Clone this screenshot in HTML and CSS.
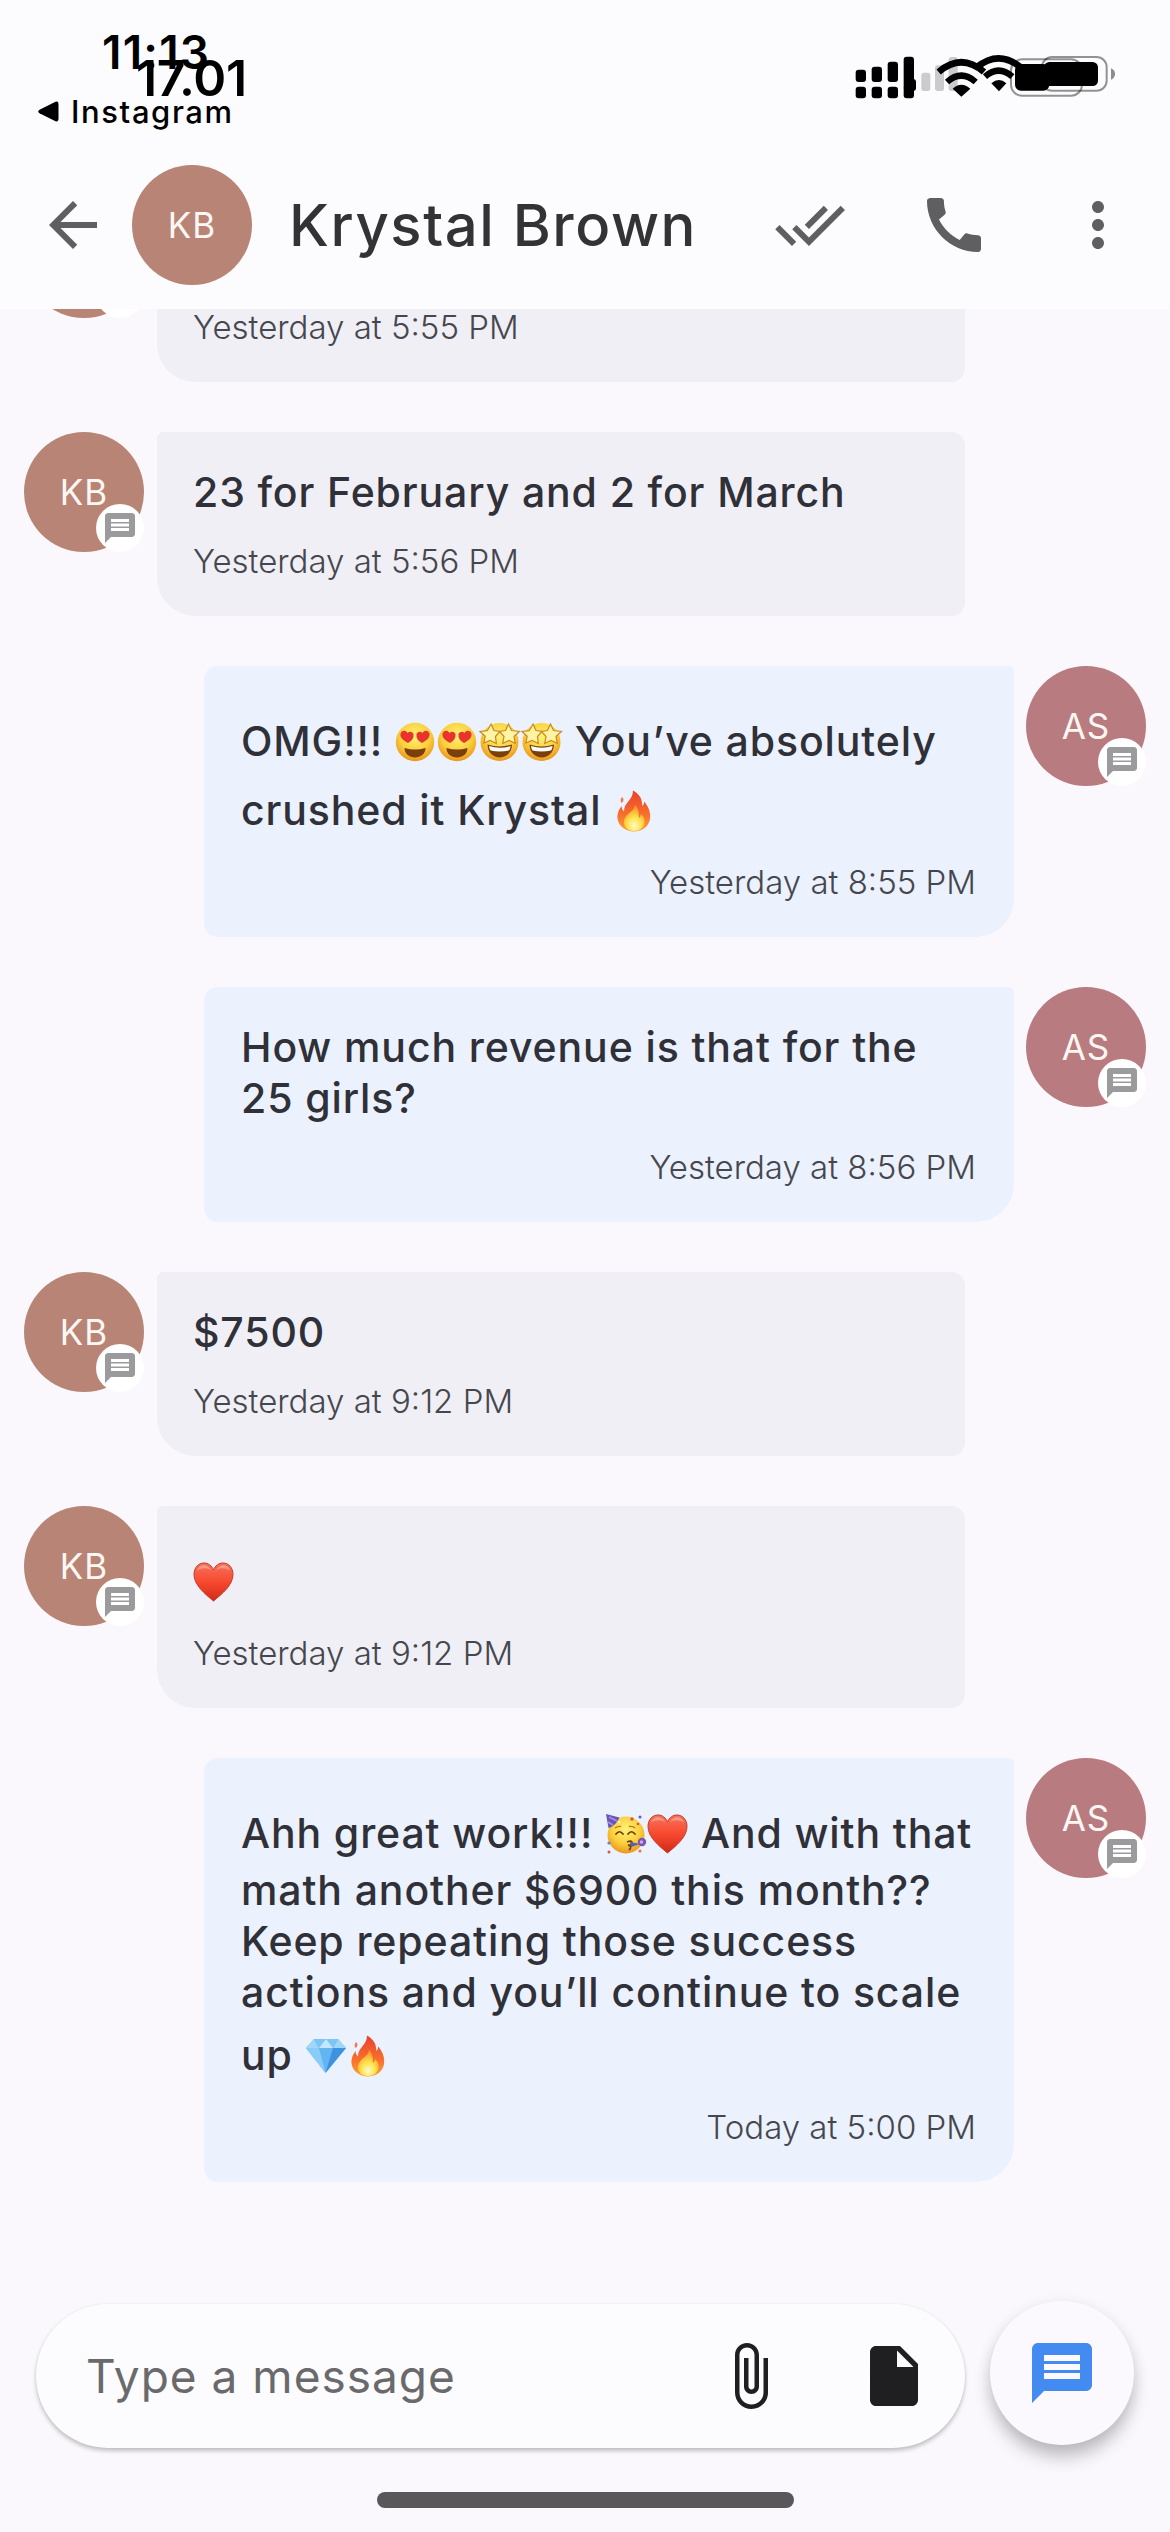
FILE: index.html
```html
<!DOCTYPE html>
<html lang="en">
<head>
<meta charset="utf-8">
<title>Krystal Brown</title>
<link rel="stylesheet" href="styles.css">
</head>
<body>
<svg class="defs" width="0" height="0" aria-hidden="true">
  <defs>
    <radialGradient id="face" cx=".5" cy=".35" r=".7">
      <stop offset="0" stop-color="#fff27a"/><stop offset=".55" stop-color="#fbd03c"/><stop offset="1" stop-color="#e88a17"/>
    </radialGradient>
    <linearGradient id="red" x1="0" y1="0" x2="0" y2="1">
      <stop offset="0" stop-color="#f5735c"/><stop offset=".5" stop-color="#f8492f"/><stop offset="1" stop-color="#cf2a18"/>
    </linearGradient>
    <linearGradient id="flame" x1="0" y1="0" x2="0" y2="1">
      <stop offset="0" stop-color="#e8412c"/><stop offset=".6" stop-color="#f9702c"/><stop offset="1" stop-color="#fba338"/>
    </linearGradient>
    <radialGradient id="glow" cx=".5" cy=".8" r=".7">
      <stop offset="0" stop-color="#fffbc4"/><stop offset=".5" stop-color="#ffe04a"/><stop offset="1" stop-color="#fd9a2c"/>
    </radialGradient>
    <symbol id="e-love" viewBox="0 0 42 42">
      <circle cx="20" cy="21" r="19.2" fill="url(#face)"/>
      <path d="M13 22C7 19 4 15 6 11.500c2-2.500 5-2 6.500.5 2-2 5.500-1.500 6 1.500.5 4-2.500 7-5.500 8.500z" fill="#e8342c"/>
      <path d="M27 22c-3-1.500-6-4.500-5.500-8.500.5-3 4-3.500 6-1.500 1.500-2.500 4.500-3 6.500-.5 2 3.500-1 7.500-7 10.500z" fill="#e8342c"/>
      <path d="M9.500 27q10.500 3 21 0c0 6-5 9.500-10.500 9.500S9.500 33 9.500 27z" fill="#7a3f0c"/>
    </symbol>
    <symbol id="e-star" viewBox="0 0 42 42">
      <circle cx="20.500" cy="21" r="19" fill="url(#face)"/>
      <path d="M12 3l3 6.500 6 1-4.500 5 .8 7L11 19.500 4.800 22l1.400-6.800L1 10.500l7.300-.8z" fill="#fff3a6" stroke="#c98a1d" stroke-width="1.200"/>
      <path d="M29.500 3l3 6.500 8 1-5.500 5 1.300 6.800-6.300-2.800-6.300 3 1.300-7-4.500-5 6-1z" fill="#fff3a6" stroke="#c98a1d" stroke-width="1.200"/>
      <path d="M8.500 23.500q12 4 24.500 0c0 8-6 13-12.200 13S8.500 31.500 8.500 23.500z" fill="#7a3f0c"/>
      <path d="M10 25q11 3.500 21.500 0c0 2-.8 3.500-1.500 4.500q-9.500 2-18.500 0Q10 27.500 10 25z" fill="#fff"/>
    </symbol>
    <symbol id="e-fire" viewBox="0 0 42 42">
      <path d="M20 .5c7 4 9.500 9 9.200 15.500 1.300-1 1.800-2.500 2-4.500C35 16 38 22 37 29c-1.300 7.500-7.500 12.500-16 12.500S5.500 36 4.500 28.500C4 23 6.500 19 8.500 16c.3 2.500.8 4 2.500 5.500C11 12 20 10.500 20 .5z" fill="url(#flame)"/>
      <path d="M22 15c0 6-9.500 8.500-11 15.500-1 6 3.500 10.500 10 10.500s11.500-4.500 10.500-11c-.5-3-2-4.500-3.500-6-.3 2-.8 3-2 4 0-5-.5-9.500-4-13z" fill="url(#glow)"/>
      <path d="M9 7c2.500 2 1.500 4.500-.5 6C7 11 7.500 9 9 7z" fill="#f07a50"/>
    </symbol>
    <symbol id="e-heart" viewBox="0 0 42 42">
      <path d="M20.500 40C12 33 1 24 1 13.500 1 6.500 5.500 2 11 2c4.300 0 7.800 2.700 9.500 7 1.700-4.300 5.200-7 9.500-7C35.500 2 40 6.500 40 13.500 40 24 29 33 20.500 40z" fill="url(#red)" stroke="#c93a28" stroke-width="1"/>
      <path d="M4 9.500C6 3 14 2 18.500 9 14 6.500 8 6.500 4 9.500zM23 9c4.500-7 12-6 14 .5C33 6.500 27 6.500 23 9z" fill="#fbb0a0" opacity=".65"/>
    </symbol>
    <symbol id="e-party" viewBox="0 0 42 42">
      <circle cx="21" cy="22" r="18.500" fill="url(#face)"/>
      <path d="M1 1l13.500 3.500Q11 13 3.500 15z" fill="#6a55b8"/>
      <path d="M4 4l8 4M3 9l5 3" stroke="#a491e6" stroke-width="1.500"/>
      <path d="M11 21q3.500-4.500 7 0M23 21q3.500-4.500 7 0" fill="none" stroke="#69380b" stroke-width="1.700" stroke-linecap="round"/>
      <path d="M10 15q3-2 6-1.500M24 13.500q4-.5 6 1.500" fill="none" stroke="#b47416" stroke-width="1.300"/>
      <path d="M22 29q5-2 5 1t-4 2q5 1 1 5" fill="none" stroke="#7a3f0c" stroke-width="1.800"/>
      <path d="M25 29l10 2-9 3z" fill="#4b62b8"/>
      <circle cx="37" cy="29" r="4.200" fill="#7657b5"/><circle cx="36.500" cy="29" r="1.700" fill="#d3a9ef"/>
      <circle cx="27" cy="6" r="1.700" fill="#d9534f"/><circle cx="35" cy="4" r="1.500" fill="#6a55b8"/>
      <circle cx="33" cy="11" r="1.300" fill="#d9534f"/><circle cx="4" cy="30" r="1.600" fill="#6a7fc8"/>
      <circle cx="4" cy="39" r="1.500" fill="#d9534f"/><circle cx="35" cy="38" r="1.600" fill="#e77a4a"/>
      <circle cx="14" cy="9" r="1.300" fill="#fff5b0"/>
    </symbol>
    <symbol id="e-gem" viewBox="0 0 42 42">
      <path d="M9 4h24l8 9-20.500 25L1 13z" fill="#62b5f1"/>
      <path d="M9 4l5 9H1zM33 4l8 9H28z" fill="#9fd6fa"/>
      <path d="M9 4h12l-7 9zM33 4l-5 9-7-9z" fill="#7cc5f6"/>
      <path d="M21 4l7 9H14z" fill="#c3e7fd"/>
      <path d="M1 13h13l6.500 25z" fill="#8accf8"/>
      <path d="M28 13h13L20.500 38z" fill="#3f92e0"/>
    </symbol>
    <symbol id="i-message" viewBox="0 0 24 24">
      <path d="M20 2H4c-1.100 0-1.990.9-1.990 2L2 22l4-4h14c1.100 0 2-.9 2-2V4c0-1.100-.9-2-2-2zm-2 12H6v-2h12v2zm0-3H6V9h12v2zm0-3H6V6h12v2z"/>
    </symbol>
  </defs>
</svg>

<div class="screen">
  <header class="top">
    <div class="status">
      <span class="clock clock-a">11:13</span>
      <span class="clock clock-b">17.01</span>
      <span class="back-app"><svg width="21" height="21" viewBox="0 0 21 21"><path d="M1.500 8.700 17.500.8Q20.500-.2 20.500 3v15q0 3.200-3 2.200L1.500 12.300Q-1 10.500 1.500 8.700z"/></svg>Instagram</span>
      <svg class="indicators" width="350" height="130" viewBox="0 0 1050 390">
        <g fill="#cbcbcd"><rect x="304" y="158" width="27" height="55" rx="8"/><rect x="345" y="136" width="27" height="77" rx="8"/><rect x="386" y="111" width="27" height="102" rx="8"/></g>
        <rect x="107" y="149" width="31" height="37" rx="9"/><rect x="155" y="140" width="31" height="46" rx="9"/><rect x="203" y="125" width="31" height="61" rx="9"/><rect x="251" y="110" width="31" height="100" rx="9"/>
        <rect x="107" y="200" width="31" height="35" rx="9"/><rect x="155" y="200" width="31" height="35" rx="9"/><rect x="203" y="200" width="31" height="35" rx="9"/><rect x="251" y="196" width="31" height="39" rx="9"/>
        <rect x="261" y="177" width="27" height="36" rx="9"/>
        <g fill="none" stroke="#000" stroke-width="20">
          <path d="M356 156q68-58 136 0"/><path d="M381 186q43-38 86 0" stroke-width="19"/>
          <path d="M470 142q66-54 132 0"/><path d="M495 170q41-36 82 0" stroke-width="19"/>
        </g>
        <path d="M398 206q26-24 53 0l-27 24z"/><path d="M514 190q23-20 45 0l-22 24z"/>
        <g fill="none" stroke="#000" stroke-opacity=".42" stroke-width="6">
          <rect x="573" y="118" width="213" height="109" rx="33"/><rect x="666" y="111" width="194" height="101" rx="30"/>
        </g>
        <rect x="585" y="132" width="103" height="80" rx="18"/><rect x="672" y="126" width="162" height="72" rx="16"/>
        <path d="M873 145q12 5 12 17t-12 17z" fill="#8c8c8e"/>
      </svg>
    </div>
    <div class="appbar">
      <svg class="icon" viewBox="0 0 24 24"><path d="M20 11H7.830l5.590-5.590L12 4l-8 8 8 8 1.410-1.410L7.830 13H20v-2z"/></svg>
      <div class="avatar kb">KB</div>
      <h1>Krystal Brown</h1>
      <div class="actions">
        <svg class="icon" viewBox="0 0 24 24"><path d="M18 7l-1.410-1.410-6.340 6.340 1.410 1.410L18 7zm4.240-1.410L11.660 16.170 7.480 12l-1.410 1.410L11.660 19l12-12-1.420-1.410zM.41 13.410L6 19l1.410-1.410L1.830 12 .41 13.410z"/></svg>
        <svg class="icon" viewBox="0 0 24 24"><path d="M20.010 15.380c-1.230 0-2.420-.2-3.530-.56-.35-.12-.74-.03-1.010.24l-1.570 1.970c-2.830-1.350-5.480-3.900-6.890-6.830l1.950-1.660c.27-.28.35-.67.24-1.020-.37-1.110-.56-2.300-.56-3.530 0-.54-.45-.99-.99-.99H4.190C3.650 3 3 3.240 3 3.990 3 13.280 10.730 21 20.010 21c.71 0 .99-.63.99-1.180v-3.450c0-.54-.45-.99-.99-.99z"/></svg>
        <svg class="icon" viewBox="0 0 24 24"><path d="M12 8c1.100 0 2-.9 2-2s-.9-2-2-2-2 .9-2 2 .9 2 2 2zm0 2c-1.100 0-2 .9-2 2s.9 2 2 2 2-.9 2-2-.9-2-2-2zm0 6c-1.100 0-2 .9-2 2s.9 2 2 2 2-.9 2-2-.9-2-2-2z"/></svg>
      </div>
    </div>
  </header>

  <main class="thread">
    <div class="row in cut">
      <div class="avatar kb"><span class="badge"></span></div>
      <div class="bubble"><div class="time">Yesterday at 5:55 PM</div></div>
    </div>
    <div class="row in">
      <div class="avatar kb">KB<span class="badge"><svg><use href="#i-message"/></svg></span></div>
      <div class="bubble"><div class="line">23 for February and 2 for March</div><div class="time">Yesterday at 5:56 PM</div></div>
    </div>
    <div class="row out">
      <div class="bubble tall">
        <div class="line first">OMG!!! <svg class="emoji" role="img" aria-label="😍"><use href="#e-love"/></svg><svg class="emoji" role="img" aria-label="😍"><use href="#e-love"/></svg><svg class="emoji" role="img" aria-label="🤩"><use href="#e-star"/></svg><svg class="emoji" role="img" aria-label="🤩"><use href="#e-star"/></svg> You’ve absolutely</div>
        <div class="line after-emoji">crushed it Krystal <svg class="emoji" role="img" aria-label="🔥"><use href="#e-fire"/></svg></div>
        <div class="time">Yesterday at 8:55 PM</div>
      </div>
      <div class="avatar as">AS<span class="badge"><svg><use href="#i-message"/></svg></span></div>
    </div>
    <div class="row out">
      <div class="bubble"><div class="line">How much revenue is that for the</div><div class="line">25 girls?</div><div class="time">Yesterday at 8:56 PM</div></div>
      <div class="avatar as">AS<span class="badge"><svg><use href="#i-message"/></svg></span></div>
    </div>
    <div class="row in">
      <div class="avatar kb">KB<span class="badge"><svg><use href="#i-message"/></svg></span></div>
      <div class="bubble"><div class="line">$7500</div><div class="time">Yesterday at 9:12 PM</div></div>
    </div>
    <div class="row in">
      <div class="avatar kb">KB<span class="badge"><svg><use href="#i-message"/></svg></span></div>
      <div class="bubble tall"><div class="line first"><svg class="emoji" role="img" aria-label="❤️"><use href="#e-heart"/></svg></div><div class="time">Yesterday at 9:12 PM</div></div>
    </div>
    <div class="row out">
      <div class="bubble tall">
        <div class="line first">Ahh great work!!! <svg class="emoji" role="img" aria-label="🥳"><use href="#e-party"/></svg><svg class="emoji" role="img" aria-label="❤️"><use href="#e-heart"/></svg> And with that</div>
        <div class="line next">math another $6900 this month??</div>
        <div class="line">Keep repeating those success</div>
        <div class="line">actions and you’ll continue to scale</div>
        <div class="line last">up <svg class="emoji" role="img" aria-label="💎"><use href="#e-gem"/></svg><svg class="emoji" role="img" aria-label="🔥"><use href="#e-fire"/></svg></div>
        <div class="time">Today at 5:00 PM</div>
      </div>
      <div class="avatar as">AS<span class="badge"><svg><use href="#i-message"/></svg></span></div>
    </div>
  </main>

  <footer class="composer">
    <div class="field">
      <span class="placeholder">Type a message</span>
      <svg class="icon dark" viewBox="0 0 24 24"><path d="M16.500 6v11.500c0 2.210-1.790 4-4 4s-4-1.790-4-4V5c0-1.380 1.120-2.500 2.500-2.500s2.500 1.120 2.500 2.500v10.500c0 .55-.45 1-1 1s-1-.45-1-1V6H10v9.500c0 1.380 1.120 2.500 2.500 2.500s2.500-1.120 2.500-2.500V5c0-2.210-1.790-4-4-4S7 2.790 7 5v12.500c0 3.040 2.460 5.500 5.500 5.500s5.500-2.460 5.500-5.500V6h-1.500z"/></svg>
      <svg class="icon dark" viewBox="0 0 24 24"><path d="M6 2c-1.100 0-1.990.9-1.990 2L4 20c0 1.100.89 2 1.990 2H18c1.100 0 2-.9 2-2V8l-6-6H6zm7 7V3.500L18.500 9H13z"/></svg>
    </div>
    <div class="fab"><svg><use href="#i-message"/></svg></div>
  </footer>
  <div class="home"></div>
</div>
</body>
</html>
```
FILE: styles.css
```css
* { box-sizing: border-box; }
body { margin: 0; background: #faf8fc; font-family: Inter, Roboto, sans-serif; }
svg { display: block; flex: none; }
.defs { position: absolute; }
.screen { width: 1170px; height: 2532px; display: flex; flex-direction: column; overflow: hidden; }

.top { height: 309px; background: #fcfcfe; flex: none; }
.status { height: 165px; position: relative; }
.clock { position: absolute; line-height: 1; font-weight: 600; color: #000; white-space: nowrap; }
.clock-a { left: 102px; top: 29px; font-size: 46px; letter-spacing: 1.2px; }
.clock-b { left: 136px; top: 53px; font-size: 50px; letter-spacing: -0.3px; }
.back-app { position: absolute; left: 38px; top: 93px; display: flex; align-items: center; gap: 12px; font-size: 31px; line-height: 37px; font-weight: 500; color: #000; letter-spacing: 1.6px; }
.indicators { position: absolute; left: 820px; top: 20px; }

.appbar { height: 120px; display: flex; align-items: center; padding-left: 37px; padding-right: 36px; }
.appbar .avatar { margin-left: 23px; }
h1 { margin: 0 0 0 37px; font-size: 58px; line-height: 70px; font-weight: 500; color: #333335; letter-spacing: 1.6px; white-space: nowrap; }
.actions { margin-left: auto; display: flex; gap: 72px; }
.icon { width: 72px; height: 72px; fill: #5f5f61; }
.icon.dark { fill: #1f1f21; }

.avatar { width: 120px; height: 120px; border-radius: 50%; flex: none; position: relative; display: flex; align-items: center; justify-content: center; font-size: 35px; letter-spacing: 1px; color: #fdf7f4; }
.kb { background: #b88476; }
.as { background: #b87c80; }
.badge { position: absolute; right: 0; bottom: 0; width: 48px; height: 48px; border-radius: 50%; background: #fff; display: flex; align-items: center; justify-content: center; }
.badge svg { width: 36px; height: 36px; fill: #9b9b9d; }

.thread { flex: none; display: flex; flex-direction: column; gap: 50px; height: 1995px; }
.row { display: flex; gap: 13px; padding: 0 24px; }
.row.out { justify-content: flex-end; gap: 12px; }
.bubble { width: 808px; padding: 35px 36px 33px; background: #efeff5; border-radius: 6px 14px 14px 38px; }
.out .bubble { width: 810px; padding: 35px 38px 33px 37px; background: #ebf1fd; border-radius: 14px 6px 38px 14px; }
.line { height: 51px; line-height: 51px; font-size: 41px; font-weight: 500; color: #2f3038; letter-spacing: 0.88px; display: flex; align-items: center; white-space: pre; }
.time { height: 44px; line-height: 44px; margin-top: 21px; font-size: 33px; font-weight: 300; color: #46474e; white-space: nowrap; }
.out .time { text-align: right; }
.first { margin-top: 15px; }
.after-emoji { margin-top: 18px; }
.next { margin-top: 6px; }
.last { margin-top: 12px; }
.tall .time { margin-top: 24px; }
.emoji { width: 42px; height: 42px; }

.cut { height: 73px; overflow: hidden; }
.cut .avatar { margin-top: -111px; }
.cut .bubble { padding-top: 0; border-top-right-radius: 0; border-top-left-radius: 0; }
.cut .time { margin-top: -4px; }

.composer { display: flex; gap: 25px; padding: 0 36px; align-items: flex-start; height: 188px; }
.field { width: 929px; height: 144px; border-radius: 72px; background: #fcfcfe; display: flex; align-items: center; padding: 0 35px 0 50px; gap: 72px; box-shadow: 0 3px 4px rgba(0,0,0,.22), 0 0 3px rgba(0,0,0,.06); }
.placeholder { margin-right: auto; font-size: 46px; color: #6a6a6c; letter-spacing: 1px; white-space: nowrap; }
.fab { width: 144px; height: 144px; margin-top: -3px; border-radius: 50%; background: #fbf9fd; display: flex; align-items: center; justify-content: center; box-shadow: 0 14px 18px -2px rgba(0,0,0,.22), 0 3px 16px rgba(0,0,0,.09); }
.fab svg { width: 72px; height: 72px; fill: #438bf0; }
.home { width: 417px; height: 16px; border-radius: 8px; background: #5a575b; margin-left: 377px; }
```
